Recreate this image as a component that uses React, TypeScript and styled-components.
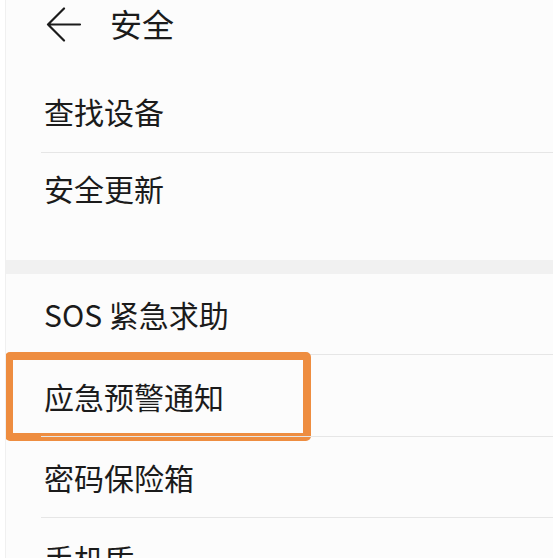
import React from "react";
import styled, { createGlobalStyle } from "styled-components";

const GlobalStyle = createGlobalStyle`
  html, body {
    margin: 0;
    padding: 0;
    background: #ffffff;
    overflow: hidden;
  }
  body {
    font-family: "Noto Sans CJK SC", "Noto Sans", sans-serif;
    color: #1b1b1b;
  }
`;

const Page = styled.div`
  margin-left: 5px;
  border-left: 1px solid #f0f0f0;
  background: #fcfcfc;
  height: 558px;
  overflow: hidden;
`;

const Header = styled.div`
  height: 76px;
  display: flex;
  align-items: flex-start;
  padding-top: 3px;
  box-sizing: border-box;
  & > svg {
    margin-left: 40px;
    margin-top: 3px;
  }
`;

const Title = styled.h1`
  margin: 0 0 0 28px;
  font-size: 32px;
  line-height: 40px;
  font-weight: 400;
`;

const Section = styled.div<{ $padBottom?: number }>`
  padding-bottom: ${(p) => p.$padBottom ?? 0}px;
`;

const Band = styled.div`
  height: 14px;
  background: #f1f1f1;
`;

const Row = styled.div<{ $h: number; $first?: boolean; $shift?: number }>`
  position: relative;
  margin-left: 35px;
  height: ${(p) => p.$h}px;
  border-top: ${(p) => (p.$first ? "none" : "1px solid #e6e6e6")};
  display: flex;
  align-items: center;
  padding-left: 3px;
  padding-top: ${(p) => Math.max(p.$shift ?? 0, 0)}px;
  padding-bottom: ${(p) => Math.max(-(p.$shift ?? 0), 0)}px;
  box-sizing: border-box;
  font-size: 30px;
  line-height: 36px;
`;

const Highlight = styled.div`
  position: absolute;
  left: -36px;
  top: -3px;
  width: 306px;
  height: 89px;
  border: 8px solid #ee8d40;
  border-radius: 5px;
  box-sizing: border-box;
  pointer-events: none;
`;

const BackArrow = () => (
  <svg width="36" height="36" viewBox="0 0 36 36" fill="none">
    <path
      d="M34 18.5H2M18 2.5L2 18.5l16 16"
      stroke="#1b1b1b"
      strokeWidth="2.2"
      strokeLinecap="round"
      strokeLinejoin="round"
    />
  </svg>
);

export default function App() {
  return (
    <>
      <GlobalStyle />
      <Page>
        <Header>
          <BackArrow />
          <Title>安全</Title>
        </Header>
        <Section $padBottom={31}>
          <Row $h={76} $first $shift={-6}>
            查找设备
          </Row>
          <Row $h={77} $shift={-6}>
            安全更新
          </Row>
        </Section>
        <Band />
        <Section>
          <Row $h={80} $first>
            SOS 紧急求助
          </Row>
          <Row $h={82} $shift={1}>
            应急预警通知
            <Highlight />
          </Row>
          <Row $h={81} $shift={-1}>
            密码保险箱
          </Row>
          <Row $h={81}>手机盾</Row>
        </Section>
      </Page>
    </>
  );
}
